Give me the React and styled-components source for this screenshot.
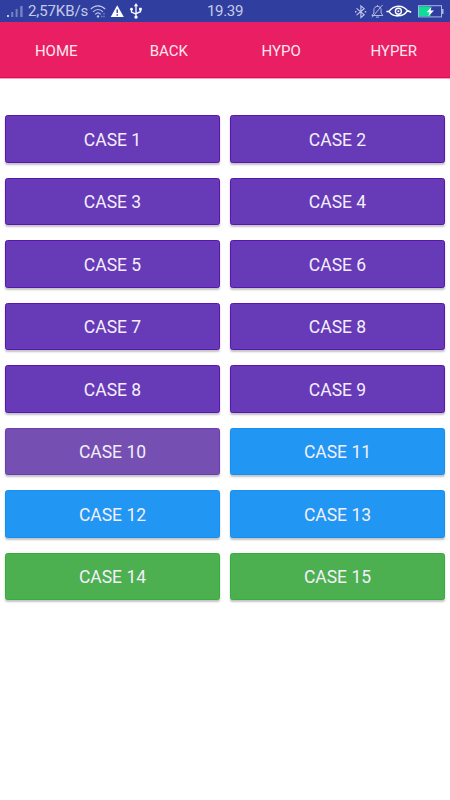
import React from "react";
import styled, { createGlobalStyle } from "styled-components";

const GlobalStyle = createGlobalStyle`
  * {
    box-sizing: border-box;
  }

  body {
    margin: 0;
    background-color: #ffffff;
    font-family: Roboto, "Liberation Sans", sans-serif;
  }
`;

const Screen = styled.div`
  width: 450px;
  height: 800px;
  background-color: #ffffff;
  overflow: hidden;
`;

const StatusBar = styled.div`
  display: grid;
  grid-template-columns: 1fr 50px 1fr;
  align-items: center;
  height: 22px;
  background-color: #303f9f;
  color: #c5cae9;
`;

const StatusLeft = styled.div`
  display: flex;
  align-items: center;
  height: 22px;
  padding-left: 6px;
`;

const StatusRight = styled.div`
  display: flex;
  align-items: center;
  justify-content: flex-end;
  height: 22px;
  padding-right: 6px;
`;

const Speed = styled.span`
  width: 62px;
  margin-left: 5px;
  padding-top: 1px;
  font-size: 15px;
  line-height: 21px;
  letter-spacing: -0.1px;
  white-space: nowrap;
`;

const Clock = styled.span`
  font-size: 15px;
  line-height: 21px;
  letter-spacing: -0.3px;
  text-align: center;
  padding-top: 1px;
`;

const Icon = styled.svg`
  display: block;
  flex: none;
  margin-left: ${(props) => props.$gap || 0}px;
`;

const NavBar = styled.nav`
  display: grid;
  grid-template-columns: repeat(4, 1fr);
  height: 56px;
  background-color: #e91e63;
  border-bottom: 1px solid #e00f55;
  box-shadow: 0 1px 0 #f6a3bf;
`;

const NavItem = styled.a`
  display: flex;
  align-items: center;
  justify-content: center;
  padding-top: 3px;
  color: #ffe6ef;
  font-size: 15px;
`;

const CaseGrid = styled.div`
  display: grid;
  grid-template-columns: 215px 215px;
  grid-auto-rows: 47.5px;
  gap: 15px 10px;
  padding: 37px 5px 0;
`;

const CaseButton = styled.button`
  margin: 0;
  padding: 2px 0 0;
  border: 1px solid ${(props) => props.$edge};
  border-radius: 2.5px;
  background-color: ${(props) => props.$color};
  box-shadow: 0 2px 2px rgba(0, 0, 0, 0.24);
  color: #f3effa;
  font-family: inherit;
  font-size: 17.5px;
`;

const menu = ["HOME", "BACK", "HYPO", "HYPER"];

const colors = {
  purple: { color: "#673ab7", edge: "#5a14b0" },
  light: { color: "#754fb2", edge: "#6a3db5" },
  blue: { color: "#2196f3", edge: "#1490f5" },
  green: { color: "#4caf50", edge: "#36ae3c" },
};

const cases = [
  { label: "CASE 1", type: "purple" },
  { label: "CASE 2", type: "purple" },
  { label: "CASE 3", type: "purple" },
  { label: "CASE 4", type: "purple" },
  { label: "CASE 5", type: "purple" },
  { label: "CASE 6", type: "purple" },
  { label: "CASE 7", type: "purple" },
  { label: "CASE 8", type: "purple" },
  { label: "CASE 8", type: "purple" },
  { label: "CASE 9", type: "purple" },
  { label: "CASE 10", type: "light" },
  { label: "CASE 11", type: "blue" },
  { label: "CASE 12", type: "blue" },
  { label: "CASE 13", type: "blue" },
  { label: "CASE 14", type: "green" },
  { label: "CASE 15", type: "green" },
];

const SignalIcon = () => (
  <Icon width="17" height="22" viewBox="0 0 17 22">
    <rect x="1" y="15" width="2" height="2" fill="#c5cae9" />
    <rect x="5.2" y="12" width="2" height="5" fill="#7782c2" />
    <rect x="9.6" y="9" width="2" height="8" fill="#7782c2" />
    <rect x="14.2" y="6" width="2.4" height="11" fill="#7782c2" />
  </Icon>
);

const WifiIcon = () => (
  <Icon width="16" height="22" viewBox="0 0 16 22" fill="none" stroke="#c5cae9" strokeWidth="1.2">
    <path d="M0.8 9.2C4.8 4.7 11.2 4.7 15.2 9.2" />
    <path d="M3.1 11.9C6 8.7 10 8.7 12.9 11.9" />
    <path d="M5.3 14.3C7 12.3 9 12.3 10.7 14.3" />
    <circle cx="8" cy="16.4" r="1.2" fill="#c5cae9" stroke="none" />
    <path d="M14 13v1.4M14 15.8v1.5M11.8 15.8v1.5" stroke="#8791c9" />
  </Icon>
);

const WarningIcon = () => (
  <Icon $gap={4} width="14" height="22" viewBox="0 0 14 22">
    <path d="M7.2 5.2L13.8 17H0.7Z" fill="#ffffff" />
    <path d="M7.2 9.5v3.6M7.2 14.2v1.5" stroke="#303f9f" strokeWidth="1.4" />
  </Icon>
);

const UsbIcon = () => (
  <Icon $gap={5} width="14" height="22" viewBox="0 0 14 22" fill="none" stroke="#ffffff" strokeWidth="1.3">
    <path d="M7 5.5v11M2.5 9.5v2.6L7 14.2M11.5 9.5v2.2L7 13.6" />
    <path d="M7 3.1L9.1 6.3H4.9Z" fill="#ffffff" stroke="none" />
    <circle cx="2.5" cy="9.2" r="1.4" fill="#ffffff" stroke="none" />
    <rect x="10.1" y="7.8" width="2.7" height="2.7" fill="#ffffff" stroke="none" />
    <circle cx="7" cy="17.1" r="1.7" fill="#ffffff" stroke="none" />
  </Icon>
);

const BluetoothIcon = () => (
  <Icon width="12" height="22" viewBox="0 0 12 22" fill="none" stroke="#c5cae9" strokeWidth="1.1">
    <path d="M1.5 8.3L9.2 14.7L5.9 17.5V5.9L9.2 8.7L1.5 15.1" />
    <path d="M0 11.7h1.4M9.8 11.7h1.4" strokeWidth="1.4" />
  </Icon>
);

const BellOffIcon = () => (
  <Icon $gap={4} width="13" height="22" viewBox="0 0 13 22" fill="none" stroke="#b3badf" strokeWidth="1">
    <path d="M0.9 15.5L2.9 13V9.8C2.9 7.7 4.4 6.4 6.5 6.4S10.1 7.7 10.1 9.8V13L11.9 15.5ZM6.5 6.4V5M5 17.1h3" />
    <path d="M11.6 4.9L1 17.4" />
  </Icon>
);

const EyeIcon = () => (
  <Icon $gap={2} width="26" height="22" viewBox="0 0 26 22" fill="none" stroke="#ffffff">
    <path d="M0.4 11.5H3C8 4.4 17 4.8 21.3 10.6L25.2 12.2M3 11.6C7 17.2 17 17.5 21.3 10.9" strokeWidth="1.6" />
    <circle cx="12.4" cy="11.2" r="3" strokeWidth="1.4" />
    <circle cx="12.4" cy="11.2" r="1" fill="#ffffff" stroke="none" />
  </Icon>
);

const BatteryIcon = () => (
  <Icon $gap={6} width="26" height="22" viewBox="0 0 26 22">
    <rect x="0.5" y="5.7" width="23" height="11.2" fill="none" stroke="#aeb6df" />
    <rect x="1" y="6.3" width="11.5" height="10" fill="#0fdc98" />
    <rect x="24" y="9" width="1.5" height="5" fill="#aeb6df" />
    <path d="M13.5 6.8L8.6 12.3H11.6L10.3 16.2L16 10.6H12.6Z" fill="#ffffff" />
  </Icon>
);

const App = () => {
  return (
    <Screen>
      <GlobalStyle />
      <StatusBar>
        <StatusLeft>
          <SignalIcon />
          <Speed>2,57KB/s</Speed>
          <WifiIcon />
          <WarningIcon />
          <UsbIcon />
        </StatusLeft>
        <Clock>19.39</Clock>
        <StatusRight>
          <BluetoothIcon />
          <BellOffIcon />
          <EyeIcon />
          <BatteryIcon />
        </StatusRight>
      </StatusBar>

      <NavBar>
        {menu.map((item) => (
          <NavItem key={item}>{item}</NavItem>
        ))}
      </NavBar>

      <CaseGrid>
        {cases.map((data, index) => (
          <CaseButton
            key={index}
            $color={colors[data.type].color}
            $edge={colors[data.type].edge}
          >
            {data.label}
          </CaseButton>
        ))}
      </CaseGrid>
    </Screen>
  );
};

export default App;
